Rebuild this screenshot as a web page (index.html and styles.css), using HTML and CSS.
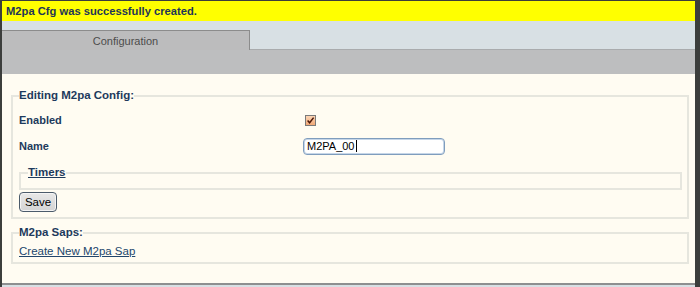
FILE: index.html
```html
<!DOCTYPE html>
<html>
<head>
<meta charset="utf-8">
<link rel="stylesheet" href="styles.css">
</head>
<body>
<div class="page">
  <div class="flash">M2pa Cfg was successfully created.</div>
  <div class="tabs">
    <div class="tab">Configuration</div>
  </div>
  <div class="bar"></div>
  <div class="content">
    <fieldset class="box main">
      <legend class="title">Editing M2pa Config:</legend>
      <div class="row">
        <span class="label">Enabled</span>
        <span class="check"><svg viewBox="0 0 9 9" width="9" height="9"><path d="M1.6 4.6 L3.6 6.8 L7.6 1.6" fill="none" stroke="#4a1608" stroke-width="1.5"/></svg></span>
      </div>
      <div class="row">
        <span class="label">Name</span>
        <div class="textbox">M2PA_00<span class="caret"></span></div>
      </div>
      <fieldset class="box timers">
        <legend class="title link">Timers</legend>
      </fieldset>
      <button class="btn">Save</button>
    </fieldset>
    <fieldset class="box saps">
      <legend class="title">M2pa Saps:</legend>
      <a class="link-plain" href="#">Create New M2pa Sap</a>
    </fieldset>
  </div>
  <div class="foot"></div>
</div>
</body>
</html>
```

FILE: styles.css
```css
html, body {
  margin: 0;
  padding: 0;
  background: #3c3e3c;
  font-family: "Liberation Sans", Arial, sans-serif;
  font-size: 11px;
  color: #1d3a5c;
}
.page {
  margin: 1px 5px 0 2px;
  background: #d8e0e4;
}
.flash {
  height: 20px;
  line-height: 20px;
  background: #ffff00;
  padding-left: 4px;
  font-weight: bold;
  font-size: 11.2px;
  color: #1d3557;
}
.tabs {
  height: 28px;
  display: flex;
  align-items: flex-end;
  background: #d8e0e4;
  border-bottom: 1px solid #a9abad;
}
.tab {
  width: 247px;
  height: 19px;
  margin-bottom: -1px;
  background: #bcbcbd;
  border-top: 1px solid #8c8c8c;
  border-right: 1px solid #8c8c8c;
  color: #4c4c4c;
  text-align: center;
  line-height: 21px;
}
.bar {
  height: 24px;
  background: #bdbebf;
}
.content {
  background: #fffcf2;
  padding: 15px 6px 19px 9px;
  border-bottom: 2px solid #8e8f90;
}
.box {
  margin: 0;
  border: 2px solid #e6e6de;
  min-width: 0;
}
.title {
  padding: 0;
  font-weight: bold;
  font-size: 11.5px;
  line-height: 13px;
  color: #1d3a5c;
}
.main {
  padding: 5px 5px 5px 6px;
}
.row {
  display: grid;
  grid-template-columns: 284px auto;
  align-items: center;
  height: 26px;
}
.label {
  font-weight: bold;
}
.check {
  width: 9px;
  height: 9px;
  margin-left: 2px;
  border: 1px solid #7a7a7a;
  background: linear-gradient(#fcd6b6, #f1a877);
  display: flex;
}
.textbox {
  width: 137px;
  height: 15px;
  border: 1px solid #7f9dbd;
  box-shadow: 0 0 0 1px #c6d6e8 inset;
  border-radius: 4px;
  background: #fff;
  padding-left: 3px;
  line-height: 15px;
  color: #000;
  display: flex;
  align-items: center;
}
.caret {
  width: 1px;
  height: 12px;
  background: #000;
  margin-left: 1px;
}
.timers {
  margin: 7px 0 0 0;
  padding: 0 7px 9px;
}
.link {
  text-decoration: underline;
}
.btn {
  display: block;
  margin-top: 2px;
  height: 20px;
  width: 38px;
  padding: 0;
  font-family: "Liberation Sans", Arial, sans-serif;
  font-size: 11.5px;
  color: #000;
  background: linear-gradient(#e8e8e8, #d4d4d4);
  border: 1px solid #4b5b6b;
  border-radius: 4px;
  box-shadow: 0 0 0 1px #f4f4f4 inset;
}
.saps {
  margin-top: 7px;
  padding: 6px 6px 4px 6px;
}
.link-plain {
  color: #22466c;
  font-size: 11.5px;
  text-decoration: underline;
  line-height: 13px;
}
.foot {
  height: 4px;
  background: #d8e0e4;
}
```
